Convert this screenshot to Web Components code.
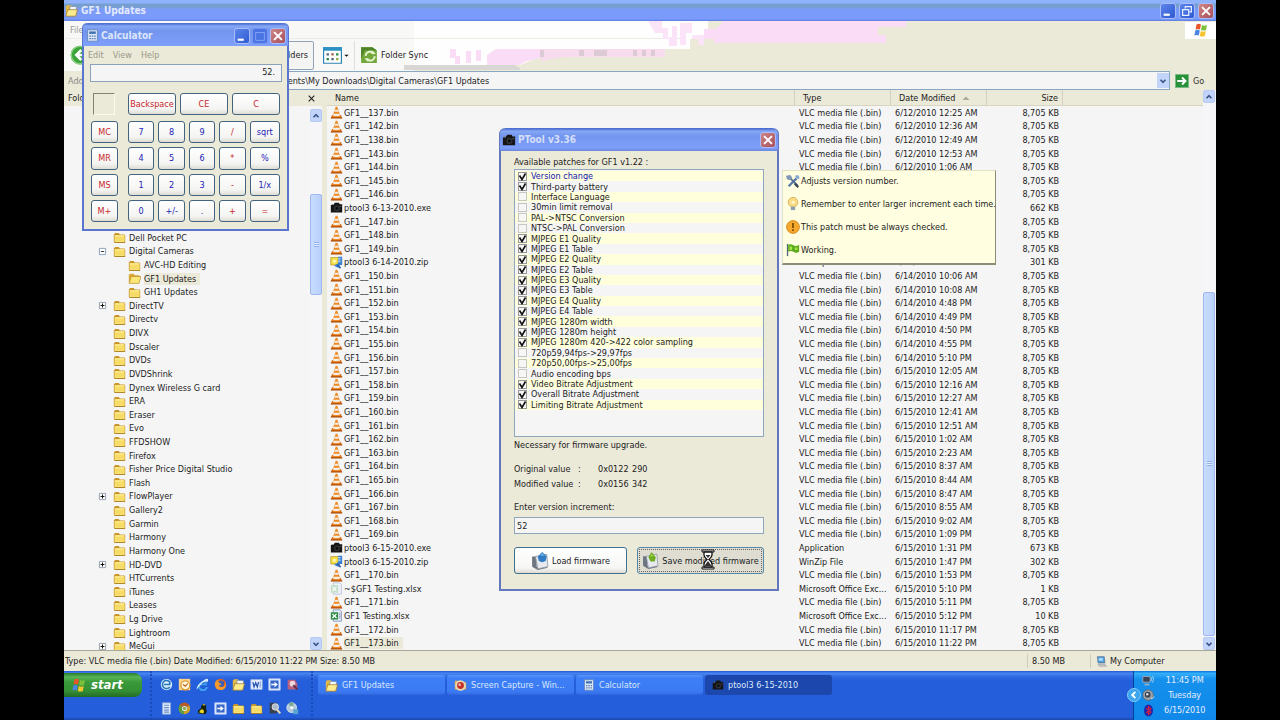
<!DOCTYPE html>
<html lang="en">
<head>
<meta charset="utf-8">
<title>GF1 Updates</title>
<style>
  html, body { height: 100%; margin: 0; background: #000; }
  body { font: 9px/12px "DejaVu Sans Condensed", "DejaVu Sans", sans-serif; color: #1c1c1c; overflow: hidden; }
</style>
</head>
<body>
<xp-desktop>
  <xp-explorer></xp-explorer>
  <xp-taskbar slot="taskbar"></xp-taskbar>
  <xp-calculator slot="windows"></xp-calculator>
  <xp-ptool slot="windows"></xp-ptool>
  <xp-tip slot="windows"></xp-tip>
</xp-desktop>
<script>
const define = (name, css, html, after) => {
  const t = document.createElement('template');
  t.innerHTML = `<style>*{box-sizing:border-box}:host{box-sizing:border-box}button,input{font:inherit;color:inherit;margin:0}${css}</style>${typeof html === 'string' ? html : ''}`;
  customElements.define(name, class extends HTMLElement {
    constructor() { super(); this.attachShadow({ mode: 'open' }); }
    connectedCallback() {
      if (this.shadowRoot.childNodes.length) return;
      this.shadowRoot.append(t.content.cloneNode(true));
      if (typeof html === 'function') this.shadowRoot.lastChild.insertAdjacentHTML('afterend', html(this));
      if (after) after(this);
    }
  });
};

/* Icon artwork, all on a 16 x 16 grid */
const folder = '<path d="M1 4.5 2.5 2.500h4.500l1.500 1.800h5.500l1 1.200v8l-1 1H2l-1-1z" fill="#c9962c"/><path d="M2 5h12v8.500H2z" fill="#fbe98a"/><path d="M2.500 7h11.500v6H3z" fill="#f6dc66"/><path d="M2 13.500h13v1H2z" fill="#a97a1c"/>';
const docPage = '<path d="M4 1h8l2 2v12H4z" fill="#e9eefb" stroke="#7c8fb8"/>';
const ICONS = {
  folder,
  open: '<path d="M1 3.500 2.500 2h4.500l1.500 2H14v3H4l-3 7z" fill="#d9a93a"/><path d="M4 5.500h12L13.500 14H1.500z" fill="#fbe678" stroke="#b88a25" stroke-width=".8"/>',
  explorer: '<path d="M1 3 2.500 1.500h5L9 4h5v10H1z" fill="#e3b946"/><path d="M6 3h8v8H6z" fill="#eef6ff" stroke="#6b7a90" stroke-width=".7"/><path d="M3.500 7h12L13 15H1z" fill="#fdeb8c" stroke="#94701d" stroke-width=".8"/>',
  cone: '<path d="M2.500 11h11l1.500 4H1z" fill="#d96a16"/><path d="M7 1h2l4 12q-5 2-10 0z" fill="#f08a24"/><path d="M6 4.500h4l.9 2.500H5.100zM4.300 9.500h7.400l.8 2.200q-4.500 1.500-9 0z" fill="#f3ede4"/><path d="M1 14h14v1.300H1z" fill="#a64d0d"/>',
  camera: '<path d="M1 5h3l2-3h5l1 2h3v10H1z" fill="#151515"/><circle cx="8.500" cy="9" r="3.500" fill="#303336"/><circle cx="8.500" cy="9" r="1.700" fill="#0a0a0a"/><path d="M2 4h2v1H2zM12 6h2v1h-2z" fill="#666"/>',
  zip: '<path d="M1 2h9v9H1z" fill="#f8e24c" stroke="#b89a1e"/><path d="M4 5h3v3H4z" fill="#fffbd0"/><path d="M10 1h5v10h-3v3H9l-4-2 5-3z" fill="#3a7fd0"/><path d="M10 3h3M10 5h3M10 7h3" stroke="#d8ecff"/><path d="M9 11l4 4" stroke="#2b5fa8" stroke-width="2"/>',
  xls: docPage + '<path d="M1 4h9v9H1z" fill="#2f8c46"/><path d="M3 6l5 5M8 6l-5 5" stroke="#fff" stroke-width="1.600"/><path d="M11 5h2M11 7h2M11 9h2M11 11h2" stroke="#88a"/>',
  xlsdim: '<g opacity=".5">' + docPage + '<path d="M1 4h9v9H1z" fill="#8cc89a"/><path d="M3 6l5 5M8 6l-5 5" stroke="#fff" stroke-width="1.600"/></g>',
  minus: '<path d="M2.500 2.500h11v11h-11z" fill="#fff" stroke="#7c97b8" stroke-width="1.500"/><path d="M5 8h6" stroke="#223" stroke-width="1.500"/>',
  plus: '<path d="M2.500 2.500h11v11h-11z" fill="#fff" stroke="#8895a8" stroke-width="1.500"/><path d="M4.500 8h7M8 4.500v7" stroke="#111" stroke-width="1.800"/>',
  winflag: '<path d="M3.500 2.500q2-1.300 4.500 0L7 7.500q-2.500-1.200-4.500 0z" fill="#e8562a"/><path d="M9 3q2.500 1.300 5 0L13 8q-2.500 1.200-5 0z" fill="#7cbf3c"/><path d="M2.300 8.500q2-1.300 4.500 0l-1 5q-2.500-1.200-4.500 0z" fill="#4a86e0"/><path d="M7.800 9q2.500 1.300 5 0l-1 5q-2.500 1.200-5 0z" fill="#f5c52c"/>',
  back: '<circle cx="8" cy="8" r="7.500" fill="#3aa63a"/><circle cx="8" cy="8" r="7" fill="none" stroke="#8fd08a"/><path d="M9 4 5 8l4 4M5 8h7" fill="none" stroke="#fff" stroke-width="2"/>',
  views: '<path d="M.5 1.500h15v13H.5z" fill="#fff" stroke="#2b83b5"/><path d="M0 1h16v3H0z" fill="#2f90c4"/><path d="M3 6h2v2H3zM7 10h2v2H7z" fill="#567"/><path d="M7 6h2v2H7z" fill="#a65"/><path d="M11 6h2v2h-2zM3 10h2v2H3z" fill="#284"/><path d="M11 10h2v2h-2z" fill="#9a4"/>',
  sync: '<path d="M1 1h10l4 3v11H1z" fill="#75a83c"/><path d="M1 1h10l4 3H4L1 12z" fill="#4f8528"/><circle cx="9" cy="9" r="4" fill="none" stroke="#e6f3cf" stroke-width="1.800" stroke-dasharray="10 2.500"/><path d="M11 4l3 3h-4zM7 14l-3-3h4z" fill="#e6f3cf"/>',
  go: '<path d="M.5.5h15v15H.5z" fill="#269136" stroke="#7ab98a"/><path d="M2.500 8h9M8 4l4 4-4 4" fill="none" stroke="#fff" stroke-width="2.200"/>',
  calc: '<path d="M2 1h12v14H2z" fill="#dce8f8" stroke="#5f82b4"/><path d="M4 3h8v3H4z" fill="#3f70b0"/><path d="M4 8h2v1.500H4zM7 8h2v1.500H7zM10 8h2v1.500h-2zM4 11h2v1.500H4zM7 11h2v1.500H7zM10 11h2v1.500h-2z" fill="#5f7fae"/>',
  min: '<path d="M3 11h7v2.500H3z" fill="#fff"/>',
  max: '<path d="M3 4h10v9H3z" fill="none" stroke="#87a6f3"/>',
  restore: '<path d="M6 5V3h7v6h-2M3 6.500h7V13H3z" fill="none" stroke="#e8efff" stroke-width="1.400"/>',
  close: '<path d="M3.500 3.500l9 9M12.500 3.500l-9 9" stroke="#fff" stroke-width="2.200"/>',
  tools: '<path d="M3 14 12 5" stroke="#5578a8" stroke-width="2.600"/><path d="M10 2l2 3 3 1q1-3-1-5z" fill="#8aa9d0"/><path d="M3 3l10 10" stroke="#54708f" stroke-width="2"/><path d="M0 2l5-1 2 3-3 3-3-1z" fill="#7f98b5"/><path d="M10 11l4 4" stroke="#345" stroke-width="2.500"/>',
  bulb: '<circle cx="8" cy="6" r="5.500" fill="#f9dc86" stroke="#d8a954"/><path d="M5.500 6l2.500-2 2.500 2-2.500 2z" fill="#fff4cc"/><path d="M5.500 11h5v4h-5z" fill="#8fa0b4"/>',
  warn: '<circle cx="8" cy="8" r="7.300" fill="#f6a92d" stroke="#d1841a"/><path d="M7 3.500h2V9H7zM7 10.500h2v2H7z" fill="#7a4b08"/>',
  flag: '<path d="M1 1h1.500v14H1z" fill="#567"/><path d="M2.500 2q3-1.500 6 .5t6.500-.5v8q-3.500 2-6.500 0t-6 0z" fill="#5cab1c"/><path d="M4 4h3v4H4zM10 5h3v3h-3z" fill="#a9e24c"/>',
  load: '<path d="M1 4h4v9l7-1 3 2-9 2-5-3z" fill="#6d7580"/><path d="M4 4l10-2 1 11-9 2z" fill="#e6e9ee" stroke="#8a929e" stroke-width=".7"/><path d="M6 4 10 0l4 4-1 4-3 1-3-1z" fill="#2f7cc4"/><path d="M8 3l2-2 2 2z" fill="#7cc0f0"/>',
  save: '<path d="M1 4h4v9l7-1 3 2-9 2-5-3z" fill="#6d7580"/><path d="M4 4l10-2 1 11-9 2z" fill="#e6e9ee" stroke="#8a929e" stroke-width=".7"/><path d="M6 5 9 0l4 5-1 4H8z" fill="#6fae24"/><path d="M8 4l1-2 2 2z" fill="#b8e060"/>',
  computer: '<path d="M2 1h10l1 9H3z" fill="#4e9be0" stroke="#56708e"/><path d="M4 3h6v4H4z" fill="#a8dcff"/><path d="M3 12h10l2 3H5z" fill="#c9ccd0" stroke="#778" stroke-width=".6"/>',
  outlookx: '<circle cx="8" cy="8" r="7" fill="#d6ecfb"/><path d="M12 5a5 5 0 1 0 0 6M5 8h7V4" fill="none" stroke="#2878b8" stroke-width="2"/>',
  clock: '<path d="M1 1h14v14H1z" fill="#f7d489"/><circle cx="9" cy="9" r="5.500" fill="#fff6df" stroke="#e09a32" stroke-width="1.600"/><path d="M6 8l3 2 3-3" fill="none" stroke="#c66b16" stroke-width="1.500"/>',
  ie: '<path d="M13 9H5a3.500 3.500 0 0 0 7 2h2.500a6 6 0 1 1-.5-3z" fill="#3fa4ee"/><path d="M5.500 7h5a2.500 2.500 0 0 0-5 0z" fill="#1b55c8"/><path d="M1 14Q0 10 7 4.500T15 2q0 2-2 4 1-3-3-1T1 14z" fill="#d8eefc"/>',
  firefox: '<circle cx="8" cy="8" r="7" fill="#e2601a"/><circle cx="8.500" cy="7" r="4" fill="#3c5fb4"/><path d="M1 7q1-5 5-5-2 2 1 4 3 1 1 3-2 0-2-1 0 4 5 3 3-1 3-6 2 7-3 9.500Q1 16 1 7z" fill="#f59a2c"/>',
  word: '<path d="M1 2h14v12H1z" fill="#e8f0ff" stroke="#9db6e6"/><path d="M3.500 5l1.500 6 2-5 2 5 1.500-6" fill="none" stroke="#2450b0" stroke-width="1.600"/><path d="M12.500 4v8" stroke="#5a7cc4"/>',
  remote: '<path d="M1 1h14v14H1z" fill="#e6eeff" stroke="#b7c9f0"/><path d="M3 3h10v10H3z" fill="#3766c8"/><path d="M4 7h4V4.500L12 8l-4 3.500V9H4z" fill="#fff"/>',
  snag: '<path d="M2 2h9l3 5v7H2z" fill="#b8607c"/><circle cx="8" cy="7" r="3.500" fill="#eed4dc"/><path d="M9 9l5 5" stroke="#60314a" stroke-width="2.500"/>',
  notes: '<path d="M3 1h10v14H3z" fill="#dbe7fa" stroke="#89a5d6"/><path d="M5 4h6M5 7h6M5 10h6M5 12.500h6" stroke="#6f90c8" stroke-width="1.400"/>',
  chrome: '<circle cx="8" cy="8" r="7" fill="#cf9f2c"/><path d="M8 8 2 4a7 7 0 0 1 12 0z" fill="#b65a28"/><path d="M8 8 2 4a7 7 0 0 0 5 11z" fill="#5d9c3c"/><circle cx="8" cy="8" r="3.200" fill="#dfe9f2"/><circle cx="8" cy="8" r="2.200" fill="#8fae5c"/>',
  bird: '<path d="M3 14q-2-4 3-6 0-5 4-6 4 3 2 6 3 4-1 7z" fill="#16200c"/><path d="M4 13q1-4 4-4 3 2 1 5zM8 3l3-1-1 3z" fill="#e9d526"/>',
  search: '<path d="M2 1h9v13H2z" fill="#38404c"/><circle cx="9" cy="6" r="4" fill="#aebccc" stroke="#e9e9e9"/><path d="M11 9l4 5" stroke="#e7d9b0" stroke-width="2.500"/>',
  disc: '<circle cx="7" cy="7" r="6" fill="#b3c9d8" stroke="#e2ecf2"/><path d="M7 7 3 2a6 6 0 0 1 7-.5z" fill="#7fa98c"/><circle cx="7" cy="7" r="1.800" fill="#fff"/><path d="M9 9h6v6H9z" fill="#5aa2cf"/>',
  capture: '<path d="M1 2h6l1 2h7v9H1z" fill="#e2b04c"/><circle cx="8" cy="8" r="6.500" fill="#e6d9b8"/><circle cx="8" cy="8" r="4.200" fill="#c33026"/><circle cx="7" cy="7" r="1.600" fill="#f5c2b8"/>',
  net: '<path d="M1 3h9v7H1z" fill="#384452" stroke="#9fb4c8"/><path d="M3 12h6v2H3z" fill="#9fb0c2"/><path d="M11 4q1.500 2.500 0 5M13 2.500q2.500 4 0 8" fill="none" stroke="#a5d2f5" stroke-width="1.200"/>',
  sound: '<circle cx="7.500" cy="7.500" r="6.500" fill="#9aa3ac" stroke="#5d6872"/><circle cx="7" cy="7" r="3.500" fill="#3c444e"/><circle cx="6.500" cy="6.500" r="1.500" fill="#d7dde2"/><path d="M11 12q3 0 4-3" fill="none" stroke="#dceafa"/>',
  bt: '<ellipse cx="8" cy="8" rx="5.500" ry="7.500" fill="#1a24a8"/><path d="M5 5l6 5-3 3V3l3 3-6 5" fill="none" stroke="#d02048" stroke-width="1.500"/>',
  chevL: '<circle cx="8" cy="8" r="7.500" fill="#3da6ee" stroke="#8ccdf8"/><path d="M9.500 4.500 6 8l3.500 3.500" fill="none" stroke="#fff" stroke-width="2.200"/>',
  up: '<path d="M4 10l4-4 4 4" fill="none" stroke="#3b5487" stroke-width="2.600"/>',
  down: '<path d="M4 6l4 4 4-4" fill="none" stroke="#3b5487" stroke-width="2.600"/>',
  x: '<path d="M3 3l10 10M13 3L3 13" stroke="#222" stroke-width="2"/>',
  caret: '<path d="M3 6h10l-5 5z" fill="#111"/>',
  sort: '<path d="M1 12h14L8 5z" fill="#aaa896"/>',
  hourglass: '<path d="M1 1h12v2H1zM1 18h12v2H1z" fill="#fff" stroke="#111"/><path d="M3 3h8v3q0 2-3 4.500 3 2.500 3 4.500v3H3v-3q0-2 3-4.500Q3 8 3 6z" fill="#fff" stroke="#111" stroke-width="1.300"/><path d="M4.500 6h5L7 9zM7 12l3 4v1H4v-1z" fill="#333"/>'
};
const i = (name, size = 13) => `<xp-icon name="${name}" style="--s:${size}px"></xp-icon>`;
define('xp-icon', ':host{display:block;flex:none;width:var(--s);height:var(--s)}svg{display:block;width:100%;height:100%}',
  h => { const n = h.getAttribute('name'); return `<svg viewBox="0 0 16 16" aria-hidden="true">${ICONS[n]}</svg>`; });

define('xp-desktop', `
  :host{display:block;height:100vh;padding:0 5vw}
  main{position:relative;display:flex;flex-direction:column;height:100%;overflow:hidden;background:#ebe9d8}
`, '<main><slot></slot><slot name="taskbar"></slot><slot name="windows"></slot></main>');

/* Caption button: kind = min | max | restore | close */
define('xp-caption-button', `
  :host{display:block;flex:none}
  button{display:grid;place-items:center;width:16px;height:16px;padding:0;border:1px solid #a9bdf8;border-radius:3px;background:linear-gradient(135deg,#5c84ea,#2f5bd2)}
  button.close{background:linear-gradient(135deg,#cf8585,#a8505c)}
  button.max{background:#4a73e4;border-color:#7695ee}
`, h => { const k = h.getAttribute('kind'); return `<button class="${k}" type="button" aria-label="${k}">${i(k, 14)}</button>`; });

/* Vertical scroll bar: thumb placed by the --before / --after flex shares */
define('xp-scrollbar', `
  :host{display:flex;flex-direction:column;flex:none;width:12px;background:#f6f6f8}
  button{display:grid;place-items:center;width:12px;height:13px;padding:0;border:1px solid #b6c8f4;border-radius:2px;background:#c3d4fb}
  .a{flex:var(--before) 0 0}.b{flex:var(--after) 0 0}
  .t{display:grid;place-items:center;flex:var(--thumb) 0 0;border:1px solid #9fb6ee;border-radius:2px;background:linear-gradient(90deg,#c9dcff,#b8d0fb)}
  .t i{width:5px;height:5px;background:repeating-linear-gradient(#8fb0ea 0 1px,#e4eeff 1px 2px)}
`, `<button type="button" aria-label="Scroll up">${i('up', 10)}</button><div class="a"></div><div class="t"><i></i></div><div class="b"></div><button type="button" aria-label="Scroll down">${i('down', 10)}</button>`);

const TREE = [['Dell Pocket PC'], ['Digital Cameras', 'minus'], ['AVC-HD Editing', '', 1], ['GF1 Updates', '', 1, 1], ['GH1 Updates', '', 1], ['DirectTV', 'plus'], ['Directv'], ['DIVX'], ['Dscaler'], ['DVDs'], ['DVDShrink'], ['Dynex Wireless G card'], ['ERA'], ['Eraser'], ['Evo'], ['FFDSHOW'], ['Firefox'], ['Fisher Price Digital Studio'], ['Flash'], ['FlowPlayer', 'plus'], ['Gallery2'], ['Garmin'], ['Harmony'], ['Harmony One'], ['HD-DVD', 'plus'], ['HTCurrents'], ['iTunes'], ['Leases'], ['Lg Drive'], ['Lightroom'], ['MeGui', 'plus']];
define('xp-folder-tree', `
  :host{display:flex;flex-direction:column;flex:none;width:258px;background:#f5f5f5}
  header{display:flex;align-items:center;justify-content:space-between;flex:none;height:16px;padding:0 6px 0 4px;background:#ebe9d8}
  header button{padding:0;border:0;background:none}
  .body{display:flex;flex:1;min-height:0;overflow:hidden}
  ul{flex:1;display:grid;grid-auto-rows:1fr;margin:125px 0 -3px;padding:0 0 0 34px;list-style:none}
  li{display:flex;align-items:center;gap:4px;min-height:0}
  li.sub{padding-left:15px}
  .tw{width:11px}
  a{color:inherit;text-decoration:none;padding:0 4px 0 0;margin-left:-1px;white-space:nowrap}
  .cur a{background:#ebe9d8}
  xp-scrollbar{--before:72;--thumb:100;--after:344;margin-top:3px}
`, `<header><span>Folders</span><button type="button" aria-label="Close folders">${i('x', 9)}</button></header>
<div class="body"><ul>${TREE.map(([n, t, s, c]) => `<li class="${s ? 'sub' : ''} ${c ? 'cur' : ''}"><span class="tw">${t ? i(t, 9) : ''}</span>${i(c ? 'open' : 'folder', 13)}<a href="#">${n}</a></li>`).join('')}</ul><xp-scrollbar></xp-scrollbar></div>`);

const bin = (n, d) => ['cone', `GF1__${n}.bin`, 'VLC media file (.bin)', d, '8,705 KB'];
const pending = (icon, name, size) => [icon, name, '', '', size];
const FILES = [
  bin(137, '6/12/2010 12:25 AM'), bin(142, '6/12/2010 12:36 AM'), bin(138, '6/12/2010 12:49 AM'), bin(143, '6/12/2010 12:53 AM'), bin(144, '6/12/2010 1:06 AM'),
  pending('cone', 'GF1__145.bin', '8,705 KB'), pending('cone', 'GF1__146.bin', '8,705 KB'),
  pending('camera', 'ptool3 6-13-2010.exe', '662 KB'),
  pending('cone', 'GF1__147.bin', '8,705 KB'), pending('cone', 'GF1__148.bin', '8,705 KB'), pending('cone', 'GF1__149.bin', '8,705 KB'),
  ['zip', 'ptool3 6-14-2010.zip', 'WinZip File', '6/14/2010 10:03 AM', '301 KB'],
  ...['6/14/2010 10:06 AM', '6/14/2010 10:08 AM', '6/14/2010 4:48 PM', '6/14/2010 4:49 PM', '6/14/2010 4:50 PM', '6/14/2010 4:55 PM', '6/14/2010 5:10 PM', '6/15/2010 12:05 AM', '6/15/2010 12:16 AM', '6/15/2010 12:27 AM', '6/15/2010 12:41 AM', '6/15/2010 12:51 AM', '6/15/2010 1:02 AM', '6/15/2010 2:23 AM', '6/15/2010 8:37 AM', '6/15/2010 8:44 AM', '6/15/2010 8:47 AM', '6/15/2010 8:55 AM', '6/15/2010 9:02 AM', '6/15/2010 1:09 PM'].map((d, k) => bin(150 + k, d)),
  ['camera', 'ptool3 6-15-2010.exe', 'Application', '6/15/2010 1:31 PM', '673 KB'],
  ['zip', 'ptool3 6-15-2010.zip', 'WinZip File', '6/15/2010 1:47 PM', '302 KB'],
  bin(170, '6/15/2010 1:53 PM'),
  ['xlsdim', '~$GF1 Testing.xlsx', 'Microsoft Office Exc...', '6/15/2010 5:10 PM', '1 KB'],
  bin(171, '6/15/2010 5:11 PM'),
  ['xls', 'GF1 Testing.xlsx', 'Microsoft Office Exc...', '6/15/2010 5:12 PM', '10 KB'],
  bin(172, '6/15/2010 11:17 PM'), bin(173, '6/15/2010 11:22 PM')];
define('xp-file-table', `
  :host{display:flex;flex:1;min-width:0;background:#f5f5f5}
  table{display:flex;flex-direction:column;flex:1;min-width:0}
  thead,th,td{display:block;padding:0;font-weight:400;text-align:left;white-space:nowrap}
  thead{flex:none;background:#ebe9d8;border-bottom:1px solid #d8d5c0}
  tbody{flex:1;min-height:0;display:grid;grid-auto-rows:1fr}
  tr{display:grid;grid-template-columns:minmax(0,1fr) 96px 96px 76px 140px;align-items:center;min-height:0}
  th{display:flex;align-items:center;gap:7px;height:15px;padding-left:8px;border-right:1px solid #d3d0bd}
  th:last-child{border:0}
  th:nth-child(4){justify-content:flex-end;padding-right:4px}
  td{padding-left:4px}
  td:nth-child(4){text-align:right;padding-right:4px}
  td:first-child{display:flex;align-items:center;gap:1px;padding-left:3px}
  td:first-child span{padding-right:4px}
  tbody tr:last-child span{background:#ebe9d8}
  xp-scrollbar{--before:190;--thumb:344;--after:1;margin-right:1px}
`, `<table><thead><tr><th>Name</th><th>Type</th><th>Date Modified ${i('sort', 8)}</th><th>Size</th><th></th></tr></thead><tbody>${FILES.map(f => `<tr><td>${i(f[0], 13)}<span>${f[1]}</span></td><td>${f[2]}</td><td>${f[3]}</td><td>${f[4]}</td><td></td></tr>`).join('')}</tbody></table><xp-scrollbar></xp-scrollbar>`);

define('xp-explorer', `
  :host{display:flex;flex-direction:column;flex:1;min-height:0}
  .title{display:flex;align-items:center;gap:3px;flex:none;height:21px;padding:0 2px 0 1px;background:linear-gradient(#90b2fd 0 3px,#769fd0 4px 7px,#7b9bfb 9px 19px,#5b7de0 21px);color:#e2e9fb;font-weight:700;font-size:10px}
  .title span{flex:1}
  .bars{position:relative;flex:none}
  .wash{position:absolute;inset:0;width:100%;height:100%}
  .menu{position:relative;display:flex;justify-content:space-between;align-items:center;height:18px;padding-left:6px;color:#999}
  .menu a{color:inherit;text-decoration:none}
  .logo{display:grid;place-items:center;width:31px;height:17px;background:#fff}
  .tools{position:relative;display:flex;align-items:center;height:32px;padding-left:6px}
  .tools button{display:flex;align-items:center;gap:3px;height:29px;border:0;background:none;padding:0}
  .tools .folders{width:70px;margin-left:154px;padding-right:5px;justify-content:flex-end;border:1px solid #90a3b8;border-radius:2px;background:#f4f4f2}
  .tools .views{padding-left:9px;gap:1px;width:40px}
  .tools .sync{padding-left:5px;border-left:1px solid #dedede}
  .addr{display:flex;align-items:center;flex:none;height:19px;color:#888;background:#ebe9d8}
  .addr label{width:38px;padding-left:4px}
  .box{display:flex;flex:1;height:19px;border:1px solid #89a6c2;background:#f5f5f5;align-items:center}
  .box input{flex:1;min-width:0;border:0;background:none;padding:0 0 0 156px;color:#1c1c1c;outline:0}
  .box button{display:grid;place-items:center;width:12px;height:15px;padding:0;border:0;background:#c3d4fb}
  .go{display:flex;align-items:center;gap:4px;width:46px;padding:0 0 0 5px;border:0;background:none;color:#333}
  .panes{display:flex;flex:1;min-height:0;gap:5px;background:#ebe9d8}
  .status{display:flex;align-items:center;flex:none;height:21px;border-top:1px solid #a9a795;background:#ebe9d8}
  .status span{border-left:1px solid #cfccb9;padding-left:4px;display:flex;align-items:center;gap:3px;height:14px}
  .status span:first-child{flex:1;border:0;padding-left:1px}
  .status .size{width:63px}.status .zone{width:126px;padding-left:5px}
`, `<div class="title">${i('explorer', 13)}<span>GF1 Updates</span>
  <xp-caption-button kind="min"></xp-caption-button><xp-caption-button kind="restore"></xp-caption-button><xp-caption-button kind="close"></xp-caption-button></div>
<div class="bars">
  <svg class="wash" viewBox="0 0 1152 50" preserveAspectRatio="none" aria-hidden="true">
    <path d="M0 0h1152v50H0z" fill="#ebe9d8"/><path d="M0 0h644v18h-18v10h-86l-70 10-14 6H0z" fill="#fefefe"/><path d="M0 0h350v50H0z" fill="#f8f8f6"/><path d="M0 17h620v1H0z" fill="#ecebe4"/>
    <path d="M660 0h182v6h-28v8h8v8H650v-4h-10V8h12z" fill="#fbdcf6"/>
    <path d="M584 0h14v7h6v9h4V5h5v20h-8v-7h-6v-6h-8zM616 2h12v10h-6v12h-6zM628 14h12v10h-6v-6h-6z" fill="#fbe3f8"/>
    <path d="M386 28h6v7h4v8h-5v-6h-5zM402 30h5v12h-5zM412 29h5v11h-5zM423 34l9-6h45v9l-14 3-8 4h-32z" fill="#fbdcf6"/>
    <path d="M477 28h124v8H500l-23 4z" fill="#f8dcee"/>
    <path d="M340 44h110l6 3v2H340z" fill="#d8d7d4"/><path d="M476 29h4v7h-4zM515 29h5v6h-5zM530 29h13v6h-13zM569 29h4v6h-4zM578 29h4v6h-4zM587 29h4v6h-4z" fill="#dccbd4"/>
  </svg>
  <div class="menu"><a href="#">File</a><div class="logo">${i('winflag', 16)}</div></div>
  <div class="tools"><button type="button" aria-label="Back">${i('back', 20)}</button><button type="button" class="folders">Folders</button><button type="button" class="views" aria-label="Views">${i('views', 19)}${i('caret', 7)}</button><button type="button" class="sync">${i('sync', 18)}Folder Sync</button></div>
</div>
<div class="addr"><label for="path">Address</label><div class="box"><input id="path" value="Documents\\My Downloads\\Digital Cameras\\GF1 Updates"><button type="button" aria-label="Show addresses">${i('down', 10)}</button></div><button type="button" class="go">${i('go', 14)}Go</button></div>
<div class="panes"><xp-folder-tree></xp-folder-tree><xp-file-table></xp-file-table></div>
<div class="status"><span>Type: VLC media file (.bin) Date Modified: 6/15/2010 11:22 PM Size: 8.50 MB</span><span class="size">8.50 MB</span><span class="zone">${i('computer', 11)}My Computer</span></div>`);

define('xp-calculator', `
  :host{position:absolute;left:18px;top:23px;width:207px;height:208px;display:flex;flex-direction:column;border:2px solid #5a75cf;border-top:0;border-radius:5px 5px 0 0;background:#ebe9d8}
  .title{display:flex;align-items:center;gap:2px;flex:none;height:23px;padding:2px 2px 0 3px;margin:0 -1px;border-radius:5px 5px 0 0;background:linear-gradient(#5374d4 0 1px,#86a8f6 3px,#7395ee 8px,#7e9ffb);color:#dce6fb;font-weight:700;font-size:10px}
  .title span{flex:1}
  nav{display:flex;gap:9px;flex:none;height:18px;align-items:center;padding-left:4px}
  nav a{color:#9a9888;text-decoration:none}
  input{flex:none;height:18px;margin:0 5px 0 6px;padding:0 6px 2px;border:1px solid #8ba2bb;background:#f5f5f5;text-align:right}
  .keys{flex:1;display:flex;flex-direction:column;gap:6px;padding:11px 7px 7px}
  .top{display:grid;grid-template-columns:33px repeat(3,1fr);column-gap:4px;height:22px}
  .mem{width:22px;margin-left:2px;border:1px solid;border-color:#85836f #fbfaf0 #fbfaf0 #85836f}
  .pad{flex:1;display:grid;grid-template-columns:37px repeat(5,1fr);grid-auto-rows:1fr;row-gap:4px}
  button{min-width:0;padding:0;border:1px solid #426480;border-radius:3px;background:linear-gradient(#fff,#f4f4f2 75%,#dedcd4);color:#1c1cb8}
  .pad button{margin-right:4px}
  .pad button:nth-child(6n+1){margin-right:10px}
  .pad button:nth-child(6n){margin-right:0}
  .r{color:#c8262c}
`, `<div class="title">${i('calc', 13)}<span>Calculator</span><xp-caption-button kind="min"></xp-caption-button><xp-caption-button kind="max"></xp-caption-button><xp-caption-button kind="close"></xp-caption-button></div>
<nav><a href="#">Edit</a><a href="#">View</a><a href="#">Help</a></nav>
<input aria-label="Result" value="52.">
<div class="keys"><div class="top"><div class="mem"></div><button class="r">Backspace</button><button class="r">CE</button><button class="r">C</button></div>
<div class="pad">${['MC', 7, 8, 9, '/', 'sqrt', 'MR', 4, 5, 6, '*', '%', 'MS', 1, 2, 3, '-', '1/x', 'M+', 0, '+/-', '.', '+', '='].map((k, n) => `<button type="button" class="${n % 6 == 0 || '/*-+='.includes(k) ? 'r' : ''}">${k}</button>`).join('')}</div></div>`);

const PATCHES = ['+Version change', '+Third-party battery', ' Interface Language', ' 30min limit removal', ' PAL->NTSC Conversion', ' NTSC->PAL Conversion', '+MJPEG E1 Quality', '+MJPEG E1 Table', '+MJPEG E2 Quality', '+MJPEG E2 Table', '+MJPEG E3 Quality', '+MJPEG E3 Table', '+MJPEG E4 Quality', '+MJPEG E4 Table', '+MJPEG 1280m width', '+MJPEG 1280m height', '+MJPEG 1280m 420->422 color sampling', ' 720p59,94fps->29,97fps', ' 720p50,00fps->25,00fps', ' Audio encoding bps', '+Video Bitrate Adjustment', '+Overall Bitrate Adjustment', '+Limiting Bitrate Adjustment'];
define('xp-ptool', `
  :host{position:absolute;left:435px;top:128px;width:280px;height:463px;display:flex;flex-direction:column;border:2px solid #6277bd;border-top:0;border-radius:6px 6px 0 0;background:#ebe9d8}
  .title{display:flex;align-items:center;gap:2px;flex:none;height:23px;padding:1px 2px 0;margin:0 -1px;border-radius:6px 6px 0 0;background:linear-gradient(#4f70d2 0 1px,#86a8f6 3px,#7395ee 8px,#7e9ffb 20px,#6a85dc);color:#d5dff8;font-weight:700;font-size:10px}
  .title span{flex:1}
  .body{flex:1;min-height:0;display:flex;flex-direction:column;padding:5px 13px 15px}
  ul{flex:1;min-height:0;display:grid;grid-template-rows:repeat(23,minmax(0,1fr));margin:1px 0 2px;padding:1px 0 26px;list-style:none;border:1px solid #8fa6bb;background:#f5f5f5;line-height:10px}
  li{display:flex;min-height:0}
  li:nth-child(odd){background:#ffffdc}
  li label{flex:1;display:flex;align-items:center;gap:4px;padding-left:3px;min-height:0;white-space:nowrap}
  li:first-child{color:#1414b4}
  li input{appearance:none;flex:none;width:9px;height:9px;border:1px solid #c6c6c2;background:#f6f6f4}
  li input:checked{border-color:#999}
  li .c{position:relative;display:grid;width:9px;height:9px}
  li .c svg{position:absolute;inset:0;width:9px;height:9px;pointer-events:none}
  dl{display:grid;grid-template-columns:64px 20px 34px 1fr;row-gap:3px;margin:12px 0 11px}
  dd{margin:0}
  .inc{height:17px;margin-top:4px;padding:0 2px;border:1px solid #8fa6bb;background:#f5f5f5}
  .row{display:flex;gap:10px;height:27px;margin-top:13px}
  .row button{position:relative;flex:1;display:flex;align-items:center;justify-content:center;gap:3px;padding:0;border:1px solid #3f7090;border-radius:3px;background:linear-gradient(#fff,#f6f6f4 80%,#dddbd2);white-space:nowrap}
  .row .save{flex:0 0 127px;background:#dfddd2;border:1px solid #5587a6;outline:1px dotted #666;outline-offset:-3px}
  .busy{position:absolute;left:63px;top:1px;width:14px}
`, `<div class="title">${i('camera', 14)}<span>PTool v3.36</span><xp-caption-button kind="close"></xp-caption-button></div>
<div class="body"><div>Available patches for GF1 v1.22 :</div>
<ul>${PATCHES.map(p => `<li><label><span class="c"><input type="checkbox"${p[0] === '+' ? ' checked' : ''}>${p[0] === '+' ? '<svg viewBox="0 0 9 9"><path d="M1.500 3.500l2.500 4 3.500-6" fill="none" stroke="#111" stroke-width="1.600"/></svg>' : ''}</span><span>${p.slice(1).replace('>', '&gt;')}</span></label></li>`).join('')}</ul>
<div>Necessary for firmware upgrade.</div>
<dl><dt>Original value</dt><dd>:</dd><dd>0x0122</dd><dd>290</dd><dt>Modified value</dt><dd>:</dd><dd>0x0156</dd><dd>342</dd></dl>
<label for="inc">Enter version increment:</label><input class="inc" id="inc" value="52">
<div class="row"><button type="button">${i('load', 18)}Load firmware</button><button type="button" class="save">${i('save', 17)}Save modified firmware<svg class="busy" viewBox="0 0 14 21" aria-hidden="true">${ICONS.hourglass}</svg></button></div></div>`);

define('xp-tip', `
  :host{position:absolute;left:718px;top:170px;width:214px;height:95px;display:flex;flex-direction:column;justify-content:space-between;padding:3px 0 6px 3px;background:#fffee0;border:1px solid #e3e1c4;border-right:1px solid #8d8c78;border-bottom:2px solid #8d8c78}
  div{display:flex;align-items:center;gap:1px;white-space:nowrap}
`, [['tools', 'Adjusts version number.'], ['bulb', 'Remember to enter larger increment each time.'], ['warn', 'This patch must be always checked.'], ['flag', 'Working.']].map(([k, t]) => `<div>${i(k, 14)}<span>${t}</span></div>`).join(''));

define('xp-taskbar', `
  :host{display:flex;flex:none;height:49px;color:#e6eeff;background:linear-gradient(#2c62d8 0 1px,#4a88f4 2px,#2f68de 6px,#245edb 10px,#245edb 46px,#1b46ab)}
  .start{display:flex;align-items:center;gap:4px;width:78px;height:24px;margin-top:2px;padding:0 0 0 7px;border:0;border-radius:0 8px 8px 0;background:linear-gradient(#2b7a2b,#57b556 4px,#3a9a3a 9px,#348f34 18px,#246b24);color:#fff;font:italic 700 13px/18px "DejaVu Sans Condensed",sans-serif}
  .quick{display:grid;grid-template-columns:repeat(8,13px);grid-auto-rows:13px;column-gap:5px;row-gap:11px;margin-left:8px;padding:7px 12px 5px 8px;border-left:2px dotted #1a49b8;border-right:2px dotted #1a49b8}
  .quick a{display:block}
  .tasks{flex:1;display:flex;gap:2px;padding:4px 0 0 5px}
  .tasks button{display:flex;align-items:center;gap:4px;flex:0 1 127px;height:20px;padding:0 7px;border:0;border-radius:3px;background:linear-gradient(#5a94fb,#3d7ff8 3px,#3b79f2 17px,#2f66dc);color:#dbe8ff;white-space:nowrap}
  .tasks .on{background:#1c47ac}
  .tray{position:relative;display:flex;gap:9px;width:83px;padding:3px 0 0 8px;border-left:1px solid #0b3f9c;background:linear-gradient(#1180e0 0 1px,#37b2fb 2px,#1590ec 8px,#0f88ea)}
  .icons{display:flex;flex-direction:column;gap:2px}
  .clock{display:flex;flex-direction:column;gap:3px;text-align:center}
  .more{position:absolute;left:-7px;top:17px;padding:0;border:0;background:none}
`, `<button type="button" class="start">${i('winflag', 16)}start</button>
<div class="quick">${['outlookx', 'clock', 'ie', 'firefox', 'explorer', 'word', 'remote', 'snag', 'notes', 'chrome', 'bird', 'remote', 'folder', 'folder', 'search', 'disc'].map(n => `<a href="#" aria-label="${n}">${i(n, 13)}</a>`).join('')}</div>
<div class="tasks"><button type="button">${i('explorer', 13)}GF1 Updates</button><button type="button">${i('capture', 13)}Screen Capture - Win...</button><button type="button">${i('calc', 12)}Calculator</button><button type="button" class="on">${i('camera', 12)}ptool3 6-15-2010</button></div>
<div class="tray"><button type="button" class="more" aria-label="Show hidden icons">${i('chevL', 14)}</button><div class="icons">${i('net', 13)}${i('sound', 13)}${i('bt', 13)}</div><div class="clock"><span>11:45 PM</span><span>Tuesday</span><span>6/15/2010</span></div></div>`);
</script>
</body>
</html>
